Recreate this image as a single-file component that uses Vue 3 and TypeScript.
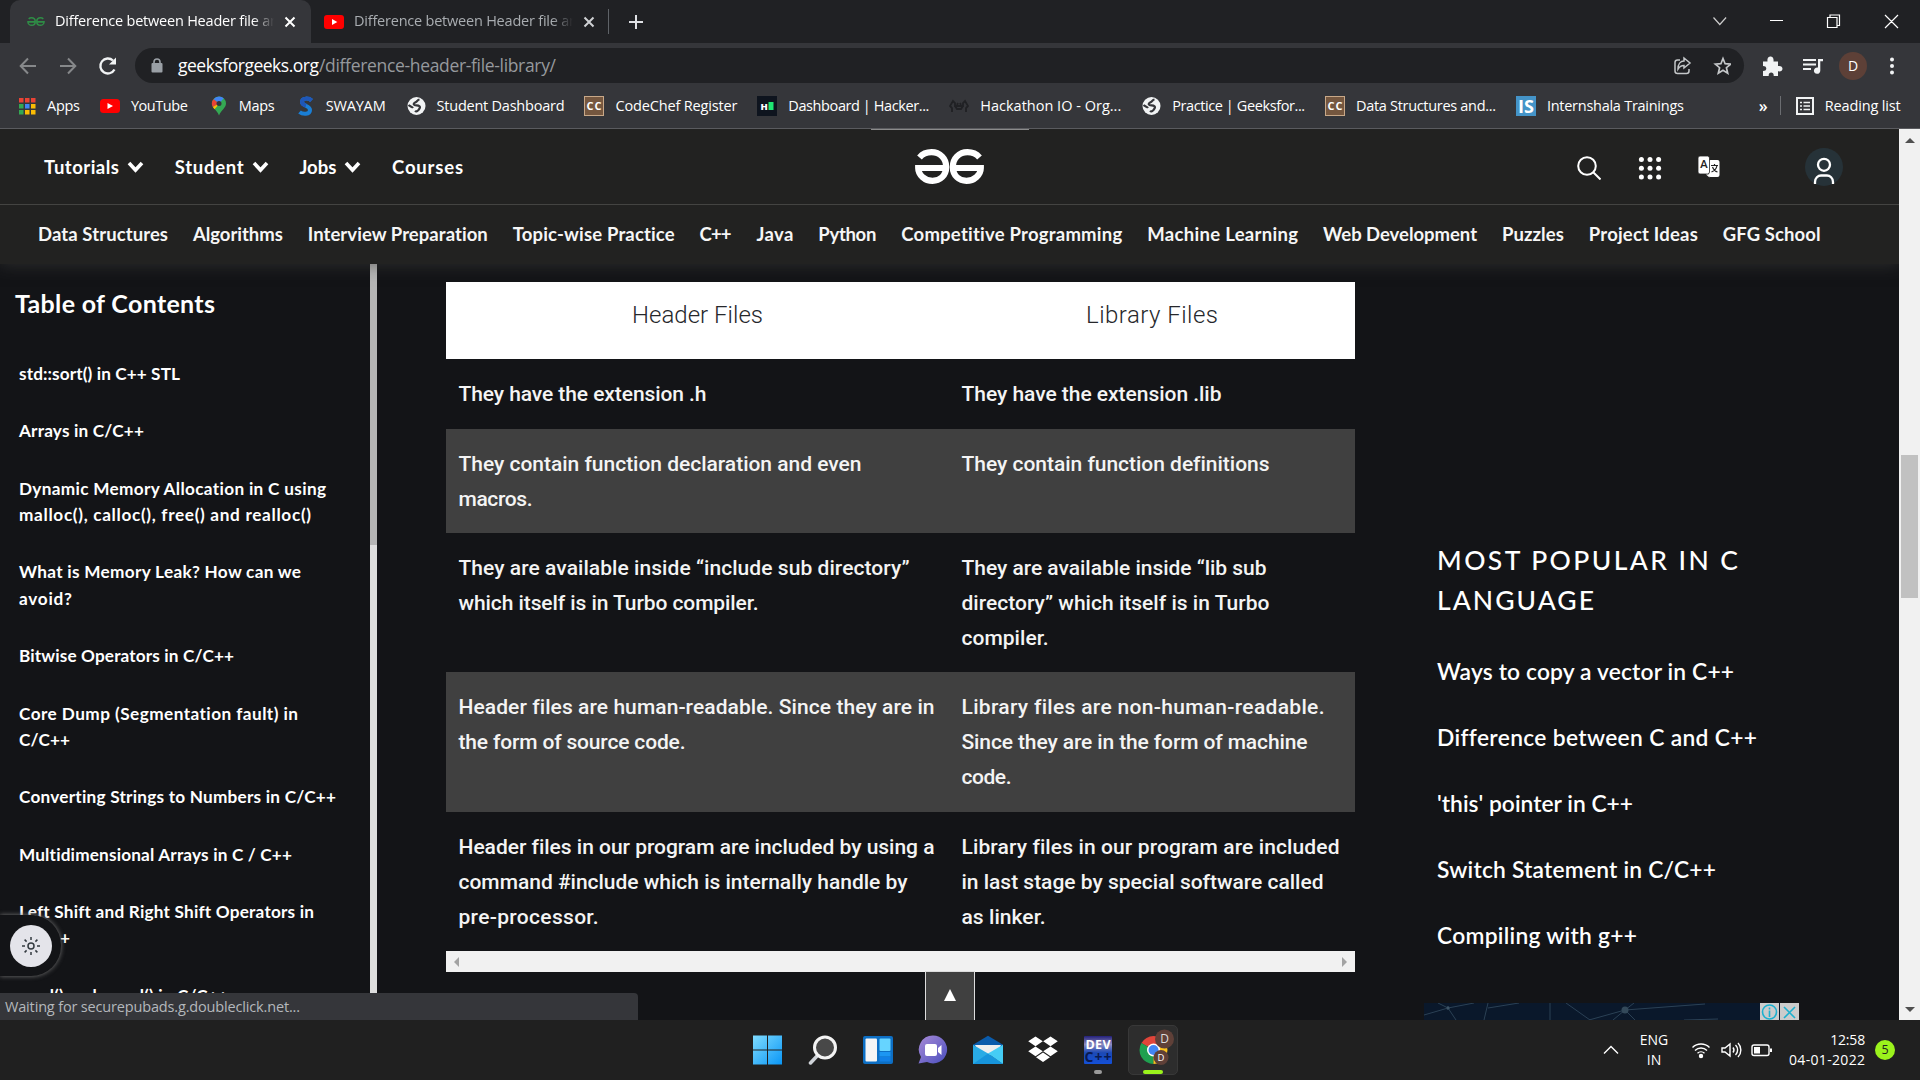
<script setup lang="ts">
import type { Directive } from 'vue'

interface Fitted { t: string; w: number }
interface Bookmark extends Fitted { icon: string }
interface Row { left: Fitted[]; right: Fitted[]; h: number }

// Spreads a single line of text over the given width.
const vFit: Directive<HTMLElement, number> = {
  mounted(el, { value }) {
    const natural = el.getBoundingClientRect().width
    const gaps = Math.max(1, (el.textContent ?? '').trim().length - 1)
    el.style.letterSpacing = `${(value - natural) / gaps}px`
    el.style.width = `${value}px`
  },
}

const bookmarks: Bookmark[] = [
  { icon: 'apps', t: 'Apps', w: 33 },
  { icon: 'youtube', t: 'YouTube', w: 57 },
  { icon: 'maps', t: 'Maps', w: 36 },
  { icon: 'swayam', t: 'SWAYAM', w: 60 },
  { icon: 'globe', t: 'Student Dashboard', w: 128 },
  { icon: 'cc', t: 'CodeChef Register', w: 122 },
  { icon: 'hacker', t: 'Dashboard | Hacker...', w: 141 },
  { icon: 'hackathon', t: 'Hackathon IO - Org...', w: 141 },
  { icon: 'globe', t: 'Practice | Geeksfor...', w: 133 },
  { icon: 'cc', t: 'Data Structures and...', w: 140 },
  { icon: 'is', t: 'Internshala Trainings', w: 137 },
]

const menu = [
  { t: 'Tutorials', w: 75, drop: true },
  { t: 'Student', w: 69, drop: true },
  { t: 'Jobs', w: 37, drop: true },
  { t: 'Courses', w: 71, drop: false },
]

const topics: Fitted[] = [
  { t: 'Data Structures', w: 130 },
  { t: 'Algorithms', w: 90 },
  { t: 'Interview Preparation', w: 180 },
  { t: 'Topic-wise Practice', w: 162 },
  { t: 'C++', w: 32 },
  { t: 'Java', w: 37 },
  { t: 'Python', w: 58 },
  { t: 'Competitive Programming', w: 221 },
  { t: 'Machine Learning', w: 151 },
  { t: 'Web Development', w: 154 },
  { t: 'Puzzles', w: 62 },
  { t: 'Project Ideas', w: 109 },
  { t: 'GFG School', w: 98 },
]

const toc: Fitted[][] = [
  [{ t: 'std::sort() in C++ STL', w: 161 }],
  [{ t: 'Arrays in C/C++', w: 125 }],
  [{ t: 'Dynamic Memory Allocation in C using', w: 307 }, { t: 'malloc(), calloc(), free() and realloc()', w: 292 }],
  [{ t: 'What is Memory Leak? How can we', w: 282 }, { t: 'avoid?', w: 53 }],
  [{ t: 'Bitwise Operators in C/C++', w: 215 }],
  [{ t: 'Core Dump (Segmentation fault) in', w: 279 }, { t: 'C/C++', w: 51 }],
  [{ t: 'Converting Strings to Numbers in C/C++', w: 317 }],
  [{ t: 'Multidimensional Arrays in C / C++', w: 273 }],
  [{ t: 'Left Shift and Right Shift Operators in', w: 295 }, { t: 'C/C++', w: 51 }],
  [{ t: 'rand() and srand() in C/C++', w: 209 }],
]

const rows: Row[] = [
  { h: 70, left: [{ t: 'They have the extension .h', w: 248 }], right: [{ t: 'They have the extension .lib', w: 260 }] },
  {
    h: 104,
    left: [{ t: 'They contain function declaration and even', w: 403 }, { t: 'macros.', w: 74 }],
    right: [{ t: 'They contain function definitions', w: 308 }],
  },
  {
    h: 139,
    left: [{ t: 'They are available inside “include sub directory”', w: 451 }, { t: 'which itself is in Turbo compiler.', w: 300 }],
    right: [{ t: 'They are available inside “lib sub', w: 305 }, { t: 'directory” which itself is in Turbo', w: 308 }, { t: 'compiler.', w: 87 }],
  },
  {
    h: 140,
    left: [{ t: 'Header files are human-readable. Since they are in', w: 476 }, { t: 'the form of source code.', w: 227 }],
    right: [{ t: 'Library files are non-human-readable.', w: 363 }, { t: 'Since they are in the form of machine', w: 346 }, { t: 'code.', w: 50 }],
  },
  {
    h: 139,
    left: [{ t: 'Header files in our program are included by using a', w: 476 }, { t: 'command #include which is internally handle by', w: 449 }, { t: 'pre-processor.', w: 140 }],
    right: [{ t: 'Library files in our program are included', w: 378 }, { t: 'in last stage by special software called', w: 362 }, { t: 'as linker.', w: 84 }],
  },
]

const popular: Fitted[] = [
  { t: 'Ways to copy a vector in C++', w: 297 },
  { t: 'Difference between C and C++', w: 320 },
  { t: "'this' pointer in C++", w: 196 },
  { t: 'Switch Statement in C/C++', w: 279 },
  { t: 'Compiling with g++', w: 200 },
]

const appDots = ['#ea4335', '#ea4335', '#ea4335', '#34a853', '#4285f4', '#fbbc04', '#34a853', '#fbbc04', '#fbbc04']
</script>

<template>
  <div class="screen">
    <div class="tabs">
      <div class="tab active">
        <svg class="gfg-mini" viewBox="0 0 69 35"><g fill="none" stroke="#2f8d46" stroke-width="6"><path d="M63 7C60 4.500 57 3.200 52.500 3.200 44 3.200 37.500 9.500 37.500 18S44 32 51.500 32 65.700 26 65.700 19H35" /><path d="M6 7C9 4.500 12 3.200 16.500 3.200 25 3.200 31.500 9.500 31.500 18S25 32 17.500 32 3.300 26 3.300 19H34" /></g></svg>
        <div class="tab-title"><span v-fit="224" class="fit">Difference between Header file an</span></div>
        <svg class="x" viewBox="0 0 12 12"><path d="M1.500 1.500l9 9m0-9l-9 9" /></svg>
      </div>
      <div class="tab">
        <svg class="yt" viewBox="0 0 20 14"><rect width="20" height="14" rx="3" fill="#f00" /><path d="M8 4l5.300 3L8 10z" fill="#fff" /></svg>
        <div class="tab-title dim"><span v-fit="224" class="fit">Difference between Header file an</span></div>
        <svg class="x dim" viewBox="0 0 12 12"><path d="M1.500 1.500l9 9m0-9l-9 9" /></svg>
      </div>
      <i class="tab-sep"></i>
      <svg class="plus" viewBox="0 0 16 16"><path d="M8 1v14M1 8h14" stroke="#dfe1e5" stroke-width="2" /></svg>
      <svg class="win" viewBox="0 0 190 20" fill="none" stroke="#fff" stroke-width="1.200"><path d="M1.500 5.500l6.300 7 6.300-7" stroke="#ccc" /><path d="M58 8.500h13M115.500 5.500h9.500v10h-9.500zM118 5.500v-2.500h9.500v10.500H125M173 3l13 13m0-13l-13 13" /></svg>
    </div>

    <div class="toolbar">
      <svg class="nav-ic" viewBox="0 0 100 24" fill="none" stroke-width="2"><path d="M17 12H2m7-7.500L1.700 12 9 19.500M41 12h15m-7-7.500l7.300 7.500-7.300 7.500" stroke="#86888a" /><path d="M95.500 15.500A7.500 7.500 0 1 1 94 6.500" stroke="#f1f3f4" stroke-width="2.300" /><path d="M97 3.500V10.500H90z" fill="#f1f3f4" /></svg>
      <div class="omni">
        <svg class="lock" viewBox="0 0 12 15"><rect x=".5" y="5" width="11" height="9.500" rx="1" fill="#9aa0a6" /><path d="M3 6V4a3 3 0 0 1 6 0v2" fill="none" stroke="#9aa0a6" stroke-width="1.600" /></svg>
        <span v-fit="141" class="fit">geeksforgeeks.org</span><span v-fit="237" class="fit path">/difference-header-file-library/</span>
        <svg class="omni-ic" viewBox="0 0 58 20" fill="none" stroke="#c4c7c9" stroke-width="1.500"><path d="M7 4H4.500A2.500 2.500 0 0 0 2 6.500V15a2.500 2.500 0 0 0 2.500 2.500h9A2.500 2.500 0 0 0 16 15v-2M11 2l6 5-6 5V9.500C8 9.500 6.500 10.500 5 13c0-5 2.500-8 6-8z" /><path d="M50 2.500l2.100 5.200 5.500.4-4.200 3.600 1.300 5.500L50 14.200l-4.700 3 1.300-5.500-4.200-3.600 5.500-.4z" stroke-width="1.700" /></svg>
      </div>
      <svg class="ext" viewBox="0 0 62 22" fill="#f1f3f4"><path d="M1 6.500h4.500C5 2.500 7 1.500 8.500 1.500s3.500 1 3 5H16v4.500c3-.5 4.500 1 4.500 2.700S19 16.800 16 16.300V21h-4.300c.2-2.500-1-3.500-2.500-3.500S6.500 18.500 6.700 21H1v-5c2 0 3.300-.8 3.300-2.500S3 11 1 11z" /><path d="M41 4h13v2H41zM41 8.500h13v2H41zM41 13h8v2h-8zM56 4h5v2.200h-2.700v9.300A3.200 3.200 0 1 1 56 12.600z" /></svg>
      <div class="me">D</div>
      <svg class="dots" viewBox="0 0 6 20" fill="#f1f3f4"><circle cx="3" cy="3.500" r="2" /><circle cx="3" cy="10" r="2" /><circle cx="3" cy="16.500" r="2" /></svg>
    </div>

    <div class="bookmarks">
      <div v-for="b in bookmarks" :key="b.t" class="bm">
        <svg viewBox="0 0 20 20">
          <g v-if="b.icon === 'apps'"><rect v-for="(c, i) in appDots" :key="i" :x="3 + (i % 3) * 6" :y="2 + Math.floor(i / 3) * 6" width="4.500" height="4.500" :fill="c" /></g>
          <g v-else-if="b.icon === 'youtube'"><rect y="3" width="20" height="14" rx="3.500" fill="#f00" /><path d="M7.500 7l5.500 3-5.500 3z" fill="#fff" /></g>
          <g v-else-if="b.icon === 'maps'"><path d="M11 .5a7 7 0 0 0-7 7c0 4.500 5 6.500 7 12 2-5.500 7-7.500 7-12a7 7 0 0 0-7-7z" fill="#34a853" /><path d="M11 .5a7 7 0 0 0-5.500 2.700L11 7.500l4.800-5.200A7 7 0 0 0 11 .5z" fill="#4285f4" /><path d="M5.500 3.200A7 7 0 0 0 4.800 11L11 7.500z" fill="#ea4335" /><path d="M4.800 11l1.700 2.200L13 6 11 7.500z" fill="#fbbc04" /><circle cx="11" cy="7.500" r="2.500" fill="#35363a" /></g>
          <g v-else-if="b.icon === 'swayam'"><path d="M16.500 4.500C14 2 7 1.500 7 6c0 4 8 3.500 8 8 0 5-7.500 4.500-10.500 2" fill="none" stroke="#1a7fd6" stroke-width="4" /><path d="M16.500 4.500C14 2 7 1.500 7 6c0 2 2 3 4 3.500" fill="none" stroke="#1f57b8" stroke-width="4" /></g>
          <g v-else-if="b.icon === 'globe'"><circle cx="10.500" cy="10" r="9" fill="#f1f3f4" /><path d="M13.500 3.500c-2 .3-2.300 2-4 2.800S7 8.300 8.500 9s3.500-.2 5 1.300-.5 2.700-1.500 4.200-2.300 1-2.800.2M2.500 9c1.500 1.500 3.500 1.500 4.500 3" fill="none" stroke="#35363a" stroke-width="2.200" /></g>
          <g v-else-if="b.icon === 'cc'"><rect x=".5" y=".5" width="19" height="19" fill="#75573f" stroke="#c8a888" /><text x="10" y="13.700" text-anchor="middle" font-size="11" font-weight="700" fill="#fff" textLength="15">CC</text></g>
          <g v-else-if="b.icon === 'hacker'"><rect width="20" height="20" fill="#0e141e" /><text x="3.500" y="13.500" font-size="9.500" font-weight="800" fill="#fff" textLength="7">H</text><rect x="11.500" y="6" width="5" height="8" fill="#1ee672" /></g>
          <g v-else-if="b.icon === 'hackathon'" fill="none" stroke="#202124" stroke-width="1.800"><path d="M3 16v-4l-2-2 3-5 2 2v3h8V7l2-2 3 5-2 2v4M6 10l2 3h4l2-3M8 9l1-2m2 0l1 2" /></g>
          <g v-else><rect width="20" height="20" fill="#4494c8" /><text x="10" y="16.500" text-anchor="middle" font-size="18" font-weight="700" fill="#fff" textLength="16" lengthAdjust="spacingAndGlyphs">IS</text></g>
        </svg>
        <span v-fit="b.w" class="fit">{{ b.t }}</span>
      </div>
      <span class="more">»</span>
      <i class="bm-sep"></i>
      <svg class="list" viewBox="0 0 18 18" fill="none" stroke="#f1f3f4"><rect x="1" y="1" width="16" height="16" stroke-width="2" /><path d="M4 5.500h2m1.500 0H14M4 9h2m1.500 0H14M4 12.500h2m1.500 0H14" stroke-width="1.700" /></svg>
      <span v-fit="76" class="fit">Reading list</span>
    </div>

    <div class="page">
      <div class="site">
        <header>
          <i class="loader"></i>
          <div class="menu">
            <template v-for="m in menu" :key="m.t">
              <div class="mi"><span v-fit="m.w" class="fit">{{ m.t }}</span><svg v-if="m.drop" viewBox="0 0 17 12"><path d="M2 2l6.500 7L15 2" fill="none" stroke="#fff" stroke-width="3.600" /></svg></div>
            </template>
            <svg class="logo" viewBox="0 0 69 35"><g fill="none" stroke="#fff" stroke-width="6.200"><path d="M64.500 8.500C61.500 5 57.500 3.200 52.500 3.200 44 3.200 37.800 9.500 37.800 18S44 31.900 51.500 31.900 65.800 26 65.800 19H35" /><path d="M4.500 8.500C7.500 5 11.500 3.200 16.500 3.200 25 3.200 31.200 9.500 31.200 18S25 31.900 17.500 31.900 3.200 26 3.200 19H34" /></g></svg>
            <svg class="find" viewBox="0 0 24 24" fill="none" stroke="#fff" stroke-width="2"><circle cx="10" cy="10" r="8.800" /><path d="M16 16l7.500 7.500" /></svg>
            <svg class="grid9" viewBox="0 0 24 24" fill="#fff"><circle v-for="i in 9" :key="i" :cx="3.400 + ((i - 1) % 3) * 8.600" :cy="3.400 + Math.floor((i - 1) / 3) * 8.800" r="2.500" /></svg>
            <svg class="lang" viewBox="0 0 22 22"><rect x="10.500" y="4" width="11" height="17" rx="2" fill="#fff" /><rect x="0" y="0" width="11.500" height="18" rx="2" fill="#fff" stroke="#222" stroke-width=".8" /><path d="M8 18.500h3.500v3z" fill="#fff" /><text x="5.800" y="12" text-anchor="middle" font-size="10.500" font-weight="700" fill="#222">A</text><path d="M13 9.500h7M16.500 8v1.500M19 9.500c-.5 3-3 5.500-5.500 6.500M14.500 11c1 2.500 3 4.500 5 5" fill="none" stroke="#222" stroke-width="1.200" /></svg>
            <svg class="user" viewBox="0 0 38 38"><circle cx="19" cy="19" r="19" fill="#263238" /><g fill="none" stroke="#fff" stroke-width="2.300"><circle cx="19" cy="16.800" r="6" /><path d="M10 36v-2c0-4 3-6.500 6-6.500h6c3 0 6 2.500 6 6.500v2" /></g></svg>
          </div>
          <nav><span v-for="n in topics" :key="n.t" v-fit="n.w" class="fit">{{ n.t }}</span></nav>
        </header>

        <div class="body">
          <aside class="side">
            <div class="toc">
              <h2><span v-fit="200" class="fit">Table of Contents</span></h2>
              <div v-for="(item, i) in toc" :key="i" class="ti">
                <div v-for="l in item" :key="l.t"><span v-fit="l.w" class="fit">{{ l.t }}</span></div>
              </div>
            </div>
            <div class="side-bar"><i></i></div>
          </aside>

          <main>
            <div class="thead"><div class="c1"><span v-fit="131" class="fit">Header Files</span></div><div class="c2"><span v-fit="132" class="fit">Library Files</span></div></div>
            <div v-for="(r, i) in rows" :key="i" class="tr" :class="{ alt: i % 2 === 1 }" :style="{ height: r.h + 'px' }">
              <div class="c1"><div v-for="l in r.left" :key="l.t"><span v-fit="l.w" class="fit">{{ l.t }}</span></div></div>
              <div class="c2"><div v-for="l in r.right" :key="l.t"><span v-fit="l.w" class="fit">{{ l.t }}</span></div></div>
            </div>
            <div class="hbar"><i class="al"></i><i class="ar"></i></div>
          </main>

          <aside class="pop">
            <h3><span v-fit="301" class="fit">MOST POPULAR IN C</span><br /><span v-fit="157" class="fit">LANGUAGE</span></h3>
            <div v-for="p in popular" :key="p.t" class="pi"><span v-fit="p.w" class="fit">{{ p.t }}</span></div>
            <div class="ad">
              <svg class="web" viewBox="0 0 335 17" fill="none" stroke="#2b4155" stroke-width="1"><path d="M0 12L24 5 32 17M24 5L14 0M24 5L50 0M60 17L64 0M64 5L95 0M126 0v17M142 0l24 17M165 17l36-10 9-7M201 7l-12 10M201 7l80-6M201 7l10 10M260 17l34-1" /><circle cx="24" cy="5" r="1.500" fill="#49606f" /><circle cx="201" cy="7" r="3.500" fill="#33495a" stroke="none" /></svg>
              <svg class="adx" viewBox="0 0 39 17"><path d="M0 0h19v17H0zM20 0h19v17H20z" fill="#ccc" /><g fill="none" stroke="#1cb0cf" stroke-width="1.600"><circle cx="9.500" cy="9" r="7" /><path d="M9.500 7.500V14M9.500 4.500v2M24 4l11 11m0-11L24 15" /></g></svg>
            </div>
          </aside>
        </div>

        <div class="theme"><div><svg viewBox="0 0 18 18" fill="none" stroke="#333a40" stroke-width="1.500"><circle cx="9" cy="9" r="3" /><path d="M9 0v3M9 15v3M0 9h3M15 9h3M2.600 2.600l2 2M13.400 13.400l2 2M2.600 15.400l2-2M13.400 4.600l2-2" /></svg></div></div>
        <div class="status"><span v-fit="295" class="fit">Waiting for securepubads.g.doubleclick.net...</span></div>
        <div class="totop"><i></i></div>
      </div>
      <div class="vbar"><i class="au"></i><i class="thumb"></i><i class="ad-arrow"></i></div>
    </div>

    <footer>
      <div class="apps">
        <svg viewBox="0 0 30 30"><defs><linearGradient id="w" x2="1" y2="1"><stop stop-color="#7fdcff" /><stop offset="1" stop-color="#0a96f5" /></linearGradient></defs><path d="M.5.500h14v14H.5zM15.500.500h14v14h-14zM.5 15.500h14v14H.5zM15.500 15.500h14v14h-14z" fill="url(#w)" /></svg>
        <svg viewBox="-1 0 30 30"><path d="M9.500 20L2 28" stroke="#cfd3d8" stroke-width="3.500" stroke-linecap="round" /><circle cx="16.500" cy="12.500" r="10.500" fill="#484848" stroke="#f4f4f4" stroke-width="3" /></svg>
        <svg viewBox="-.5 0 30 30"><rect y="1" width="30" height="28" rx="2" fill="#0d6fc4" /><rect x="2.500" y="3.500" width="11.500" height="23" rx="1" fill="#f5f5f5" /><rect x="16.500" y="3.500" width="11" height="12.500" rx="1" fill="#66d4ff" /><rect x="16.500" y="17" width="11" height="4.500" fill="#1c96f2" /><rect x="16.500" y="22" width="11" height="4.500" fill="#1180e6" /></svg>
        <svg viewBox="0 0 30 30"><defs><linearGradient id="c" x2="1" y2="1"><stop stop-color="#a88ad6" /><stop offset="1" stop-color="#4a4fbf" /></linearGradient></defs><path d="M15.500.5a14 14 0 1 1-6 26.600L1 28.500l2.500-6.500A14 14 0 0 1 15.500.5z" fill="url(#c)" /><rect x="7.500" y="9" width="12" height="12" rx="2" fill="#fff" /><path d="M20.500 13l3.500-3v10l-3.500-3z" fill="#fff" /></svg>
        <svg viewBox="-.5 0 30 30"><path d="M15 .8l15 9V16H0V9.800z" fill="#0a5bab" /><path d="M2 10h26l-5 10H7z" fill="#eee" /><path d="M0 9.800L15 18.500 30 29H0z" fill="#29abe5" /><path d="M30 9.800V29L15 18.500z" fill="#45cdf5" /><path d="M0 29l15-10.500L30 29z" fill="#1795dc" /></svg>
        <svg viewBox="-.5 0 30 30" fill="#fff"><path d="M7.500 1.500l7.300 4.800-7.300 4.900L.2 6.300zM22.500 1.500l7.300 4.800-7.300 4.900-7.300-4.900zM7.500 11.500l7.300 4.800-7.300 4.900-7.300-4.900zM22.500 11.500l7.300 4.800-7.300 4.900-7.300-4.900zM15 17.500l7 4.700-7 4.900-7-4.900z" /></svg>
        <div class="dev"><svg viewBox="0 0 30 30"><defs><linearGradient id="d" x2="0" y2="1"><stop stop-color="#23207a" /><stop offset=".3" stop-color="#8d8bc0" /><stop offset=".6" stop-color="#1b49b5" /><stop offset="1" stop-color="#1450d8" /></linearGradient></defs><rect x="1" y="1" width="28" height="28" rx="1" fill="url(#d)" /><text x="15" y="13.500" text-anchor="middle" font-size="12.500" font-weight="700" fill="#fff" textLength="25">DEV</text><text x="15" y="27" text-anchor="middle" font-size="14" font-weight="700" fill="#0a1a50" textLength="27">C++</text></svg><i></i></div>
        <div class="chrome"><svg viewBox="0 0 36 38"><path d="M15.500 21L3.400 14A14 14 0 0 1 27.600 14z" fill="#e0453a" /><path d="M15.500 21L3.400 14a14 14 0 0 0 12.100 21z" fill="#1fa050" /><path d="M15.500 21l12.100-7a14 14 0 0 1-12.100 21z" fill="#fcc31e" /><circle cx="15.500" cy="21" r="6.500" fill="#fff" /><circle cx="15.500" cy="21" r="5" fill="#4285f4" /><circle cx="26.500" cy="10" r="9.500" fill="#5f4038" /><text x="26.500" y="14.200" text-anchor="middle" font-size="12" fill="#ddd">D</text><circle cx="23" cy="28.500" r="7.500" fill="#5f4038" /><text x="23" y="32" text-anchor="middle" font-size="9.500" fill="#fff">D</text></svg><i></i></div>
      </div>
      <div class="tray">
        <svg class="up" viewBox="0 0 16 10"><path d="M1 8.500l7-7 7 7" fill="none" stroke="#fff" stroke-width="1.400" /></svg>
        <div class="eng">ENG<br />IN</div>
        <svg class="sys" viewBox="0 0 82 20" fill="none" stroke="#fff" stroke-width="1.400"><path d="M1.500 7.500a12 12 0 0 1 17 0M4 10.500a8.500 8.500 0 0 1 12 0M6.500 13.300a5 5 0 0 1 7 0" /><circle cx="10" cy="16" r="1.500" fill="#fff" /><path d="M31 8h3l5-4v12l-5-4h-3zM42 7.500a4 4 0 0 1 0 5M44.500 5a7 7 0 0 1 0 10M47 3a10 10 0 0 1 0 14" /><rect x="61" y="5" width="17" height="10.500" rx="2" /><path d="M80 8.500v3.500" stroke-width="2" /><rect x="63" y="7" width="6" height="6.500" fill="#fff" stroke="none" /></svg>
        <div class="clock"><span v-fit="35" class="fit">12:58</span><br /><span v-fit="76" class="fit">04-01-2022</span></div>
        <div class="badge">5</div>
      </div>
    </footer>
  </div>
</template>

<style>
html, body { margin: 0; background: #202020; overflow: hidden; }
</style>

<style scoped>
* { box-sizing: border-box; }
svg { display: block; flex: none; }
.screen { width: 1920px; height: 1080px; display: flex; flex-direction: column; overflow: hidden; font-family: "Open Sans", "Noto Sans", sans-serif; color: #fff; background: #202020; }
.fit { display: inline-block; white-space: nowrap; flex: none; font-variant-ligatures: none; }

.tabs { height: 43px; flex: none; background: #202124; display: flex; align-items: center; padding-left: 10px; font-size: 14.5px; }
.tab { width: 301px; height: 43px; display: flex; align-items: center; padding-left: 13px; flex: none; }
.tab.active { width: 301px; padding-left: 17px; background: #35363a; border-radius: 10px 10px 0 0; }
.gfg-mini { width: 18px; height: 9px; margin-right: 10px; }
.tab-title { width: 219px; margin-right: 10px; overflow: hidden; height: 22px; line-height: 20px; -webkit-mask-image: linear-gradient(90deg, #000 198px, transparent 219px); }
.dim { color: #a9adb1; }
.yt { width: 20px; height: 14px; margin-right: 10px; }
.x { width: 12px; height: 12px; fill: none; stroke: #fff; stroke-width: 2; }
.x.dim { stroke: #cfd1d4; }
.tab-sep { width: 1px; height: 25px; background: #5f6368; margin-left: -4px; }
.plus { width: 16px; height: 16px; margin-left: 19px; }
.win { width: 190px; height: 20px; margin-left: 1068px; }

.toolbar { height: 45px; flex: none; background: #35363a; display: flex; align-items: center; padding-left: 19px; }
.nav-ic { width: 100px; height: 24px; margin-right: 16px; }
.omni { width: 1609px; height: 35px; border-radius: 18px; background: #202124; display: flex; align-items: center; padding-left: 16px; font-size: 17.5px; }
.omni .fit { line-height: 30px; position: relative; top: -1px; }
.lock { width: 12px; height: 15px; margin-right: 15px; }
.path { color: #96999d; }
.omni-ic { width: 58px; height: 20px; margin-left: auto; margin-right: 13px; }
.ext { width: 62px; height: 22px; margin-left: 18px; }
.me { width: 28px; height: 28px; border-radius: 50%; background: #5d4037; margin-left: 15px; text-align: center; font-size: 14px; line-height: 28px; }
.dots { width: 6px; height: 20px; margin-left: 22px; }

.bookmarks { height: 41px; flex: none; background: #35363a; border-bottom: 1px solid #5a5b5f; display: flex; align-items: center; padding: 0 0 5px 16px; font-size: 14.5px; }
.bm { display: flex; align-items: center; margin-right: 19.9px; flex: none; }
.bm svg { width: 20px; height: 20px; margin-right: 11px; }
.more { margin-left: 55px; width: 21px; font-size: 16px; font-weight: 600; line-height: 18px; }
.bm-sep { width: 1px; height: 19px; background: #6b6d71; }
.list { width: 18px; height: 18px; margin: 0 11px 0 15px; }

.page { height: 891px; flex: none; display: flex; }
.site { width: 1899px; position: relative; background: #131417; font-family: Lato, sans-serif; overflow: hidden; display: flex; flex-direction: column; }
header { height: 135px; flex: none; background: #222221; position: relative; z-index: 2; box-shadow: 0 2px 14px rgba(60, 60, 58, .55); }
.loader { position: absolute; left: 871px; top: 0; width: 158px; height: 1px; background: #8b8b8b; }
.menu { height: 76px; border-bottom: 1px solid #444442; display: flex; align-items: center; padding-left: 44px; font-weight: 700; font-size: 18.5px; }
.mi { display: flex; align-items: center; margin-right: 30.7px; flex: none; padding-top: 1px; }
.mi svg { width: 17px; height: 12px; margin-left: 8px; }
.logo { width: 69px; height: 35px; margin-left: 421px; }
.find { width: 24px; height: 24px; margin: 2px 0 0 593px; }
.grid9 { width: 24px; height: 24px; margin: 2px 0 0 37px; }
.lang { width: 22px; height: 22px; margin-left: 36px; }
.user { width: 38px; height: 38px; margin-left: 85px; }
nav { height: 57px; display: flex; align-items: center; gap: 24.9px; padding-left: 38px; font-size: 18.5px; font-weight: 700; color: #f6f6f6; }

.body { flex: 1; display: flex; overflow: hidden; }
.side { width: 377px; display: flex; flex: none; overflow: hidden; }
.toc { width: 370px; padding: 22px 0 0 19px; font-size: 17.2px; font-weight: 700; line-height: 26.3px; }
h2 { font-size: 25px; line-height: 34px; margin: 0 0 41px -4px; font-weight: 700; }
.ti { margin-bottom: 31.1px; }
.ti div, .tr .c1 div, .tr .c2 div { white-space: nowrap; }
.ti div { height: 26.3px; }
.side-bar { width: 7px; background: #dedede; height: 760px; }
.side-bar i { display: block; height: 281px; background: #b5b5b5; }

main { width: 909px; margin: 18px 0 0 69px; flex: none; font-family: Roboto, sans-serif; }
.thead { height: 77px; background: #fff; color: #26272b; display: flex; font-size: 24px; font-weight: 300; line-height: 32px; text-align: center; padding-top: 17px; }
.thead .c1 { width: 503px; }
.thead .c2 { width: 406px; }
.tr { display: flex; padding-top: 18.4px; font-size: 21px; font-weight: 500; line-height: 34.8px; color: #f4f4f4; }
.tr.alt { background: #404040; }
.tr .c1 { width: 503px; padding-left: 12.5px; }
.tr .c2 { width: 406px; padding-left: 12.5px; }
.tr .c1 div, .tr .c2 div { height: 34.8px; }
.hbar { height: 21px; background: #f1f1f1; display: flex; align-items: center; justify-content: space-between; padding: 0 8px; }
.al, .ar { border: 5px solid transparent; }
.al { border-left: 0; border-right-color: #a3a3a3; }
.ar { border-right: 0; border-left-color: #a3a3a3; }

.pop { width: 380px; margin-left: 69px; padding: 276px 0 0 13px; flex: none; font-weight: 600; }
h3 { margin: 0 0 36px; font-size: 26.5px; line-height: 40px; font-weight: 500; height: 80px; }
.pi { font-size: 22.8px; line-height: 30px; height: 30px; margin-bottom: 36px; }
.ad { margin: 53px 0 0 -13px; width: 375px; height: 17px; background: #0a182b; display: flex; }
.web { width: 335px; height: 17px; margin-right: 1px; }
.adx { width: 39px; height: 17px; }

.theme { position: absolute; left: 0; top: 786px; width: 61px; height: 61px; border-radius: 0 30px 30px 0; background: #131417; box-shadow: 0 0 5px #777; padding: 10px; z-index: 4; }
.theme div { width: 42px; height: 42px; border-radius: 50%; background: #e4e4ea; display: flex; align-items: center; justify-content: center; }
.theme svg { width: 18px; height: 18px; }
.status { position: absolute; left: 0; top: 864px; width: 638px; height: 27px; background: #35363a; border-top-right-radius: 4px; font: 14.5px/27px "Open Sans", sans-serif; color: #b4b8bc; padding-left: 5px; z-index: 5; }
.totop { position: absolute; left: 925px; top: 842px; width: 50px; height: 50px; background: #404040; border: 1px solid #ddd; display: flex; justify-content: center; padding-top: 17px; z-index: 5; }
.totop i { width: 0; height: 0; border: 6px solid transparent; border-top: 0; border-bottom: 12px solid #fff; }

.vbar { width: 21px; background: #f1f1f1; display: flex; flex-direction: column; align-items: center; }
.au, .ad-arrow { border: 5px solid transparent; }
.au { border-top: 0; border-bottom-color: #505050; margin-top: 9px; }
.thumb { width: 17px; height: 143px; background: #c1c1c1; margin-top: 312px; }
.ad-arrow { border-bottom: 0; border-top-color: #505050; margin-top: auto; margin-bottom: 8px; }

footer { height: 60px; flex: none; display: flex; background: #202020; padding-left: 740px; }
.apps { display: flex; width: 441px; align-items: center; }
.apps > * { width: 55px; }
.apps > svg { height: 30px; }
.dev { display: flex; flex-direction: column; align-items: center; padding-top: 15px; height: 60px; }
.dev svg { width: 30px; height: 30px; }
.dev i { width: 8px; height: 4px; border-radius: 2px; background: #9a9a9a; margin-top: 5px; }
.chrome { height: 50px; width: 50px; margin-left: 3px; background: #2d2d2d; border: 1px solid #383838; border-radius: 5px; display: flex; flex-direction: column; align-items: center; padding-top: 3px; }
.chrome svg { width: 36px; height: 38px; margin-left: 5px; }
.chrome i { width: 20px; height: 4px; border-radius: 2px; background: #9bf31c; margin-top: 3px; flex: none; }
.tray { display: flex; align-items: center; padding-left: 422px; font-size: 14px; line-height: 20px; }
.up { width: 16px; height: 10px; }
.eng { width: 44px; margin-left: 13px; text-align: center; }
.sys { width: 82px; height: 20px; margin-left: 15px; }
.clock { width: 80px; text-align: right; margin-left: 12px; white-space: nowrap; }
.badge { width: 20px; height: 20px; border-radius: 50%; background: #9bf31c; color: #202020; text-align: center; font-size: 12.5px; line-height: 20px; margin-left: 10px; }
</style>
